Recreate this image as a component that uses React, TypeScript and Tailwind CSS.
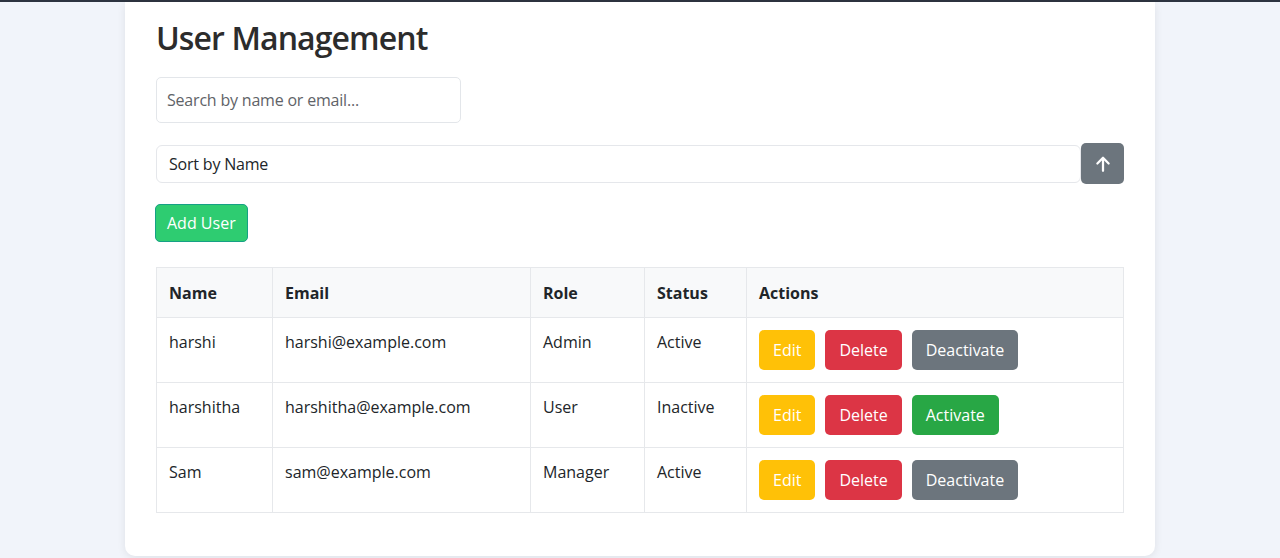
import React from "react";

const users = [
  { name: "harshi", email: "harshi@example.com", role: "Admin", status: "Active" },
  { name: "harshitha", email: "harshitha@example.com", role: "User", status: "Inactive" },
  { name: "Sam", email: "sam@example.com", role: "Manager", status: "Active" },
];

const btn = "h-10 px-[14px] rounded-[5px] text-white text-base leading-6";

export default function App() {
  return (
    <div className="min-h-[558px] bg-[#f1f4fa] border-t-2 border-[#2d3440] font-['Open_Sans',sans-serif] text-[#212529]">
      <div className="ml-[125px] w-[1030px] min-h-[554px] bg-white rounded-b-[10px] shadow-[0_2px_8px_rgba(0,0,0,0.08)] px-[31px] pt-[14px]">
        <h2 className="text-[32px] font-semibold text-[#2c2c2c] leading-[44px] tracking-[-0.9px]">User Management</h2>

        <input
          className="mt-[17px] block w-[305px] h-[46px] px-[10px] border border-[#e3e6ea] rounded-[5px] text-base tracking-[-0.2px] placeholder:text-[#5f6368] outline-none"
          placeholder="Search by name or email..."
        />

        <div className="mt-[20px] flex items-center">
          <div className="flex-1 h-[38px] flex items-center px-3 border border-[#e5e7eb] rounded-[6px] text-base tracking-[-0.2px] text-[#212529]">
            Sort by Name
          </div>
          <button className="w-[43px] h-[41px] rounded-[5px] bg-[#6c757d] flex items-center justify-center">
            <svg width="18" height="18" viewBox="0 0 16 16" fill="none" stroke="white" strokeWidth="2" strokeLinecap="round" strokeLinejoin="round">
              <path d="M8 14V2.5M3 7.5L8 2.5l5 5" />
            </svg>
          </button>
        </div>

        <button className="mt-[20px] -ml-px h-[38px] px-[11px] rounded-[5px] bg-[#2ecc71] border border-[#16a085] text-white text-base">
          Add User
        </button>

        <table className="mt-[25px] w-[968px] border-collapse border border-[#e6e8eb] text-base">
          <thead>
            <tr className="bg-[#f8f9fa] h-[50px]">
              <th className="w-[116px] border border-[#e6e8eb] px-3 text-left font-bold">Name</th>
              <th className="w-[258px] border border-[#e6e8eb] px-3 text-left font-bold">Email</th>
              <th className="w-[114px] border border-[#e6e8eb] px-3 text-left font-bold">Role</th>
              <th className="w-[102px] border border-[#e6e8eb] px-3 text-left font-bold">Status</th>
              <th className="border border-[#e6e8eb] px-3 text-left font-bold">Actions</th>
            </tr>
          </thead>
          <tbody>
            {users.map((u) => (
              <tr key={u.email} className="h-[65px]">
                <td className="border border-[#e6e8eb] px-3 pt-3 align-top">{u.name}</td>
                <td className="border border-[#e6e8eb] px-3 pt-3 align-top">{u.email}</td>
                <td className="border border-[#e6e8eb] px-3 pt-3 align-top">{u.role}</td>
                <td className="border border-[#e6e8eb] px-3 pt-3 align-top">{u.status}</td>
                <td className="border border-[#e6e8eb] px-3 align-middle">
                  <div className="flex gap-[10px]">
                    <button className={`${btn} bg-[#ffc107]`}>Edit</button>
                    <button className={`${btn} bg-[#dc3545]`}>Delete</button>
                    {u.status === "Active" ? (
                      <button className={`${btn} bg-[#6c757d]`}>Deactivate</button>
                    ) : (
                      <button className={`${btn} bg-[#28a745]`}>Activate</button>
                    )}
                  </div>
                </td>
              </tr>
            ))}
          </tbody>
        </table>
      </div>
    </div>
  );
}
